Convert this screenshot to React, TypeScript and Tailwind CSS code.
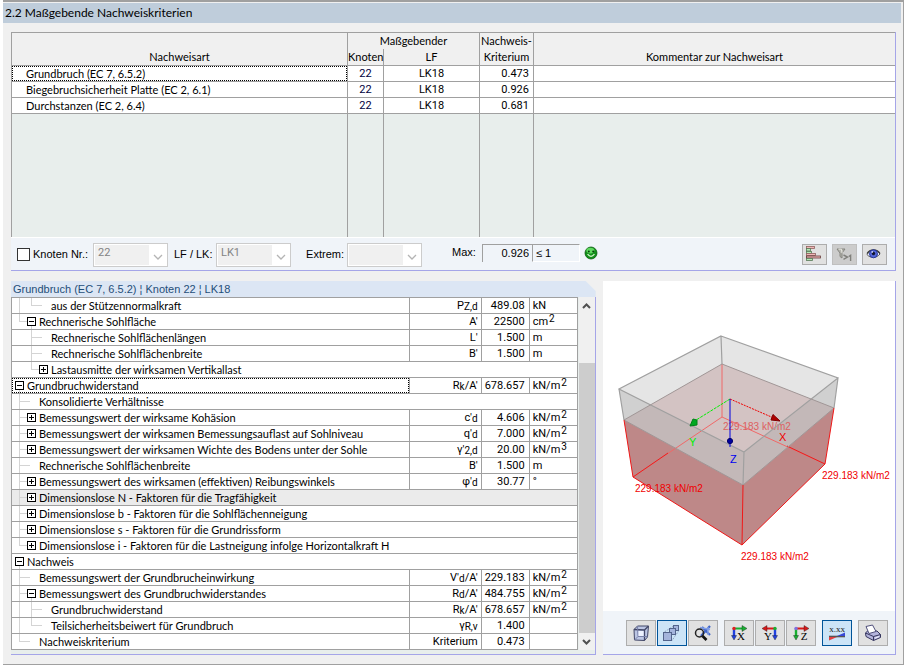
import type { ReactNode } from "react";
import clsx from "clsx";

interface CriterionRow {
  name: string;
  node: string;
  lf: string;
  value: string;
}

type Guide = "line" | "branch" | "last" | "none";
type Marker = "plus" | "minus" | "leaf" | "none";

interface DetailRow {
  label: string;
  guides: Guide[];
  marker: Marker;
  symbol?: ReactNode;
  value?: string;
  unit?: ReactNode;
  focused?: boolean;
  shaded?: boolean;
}

const criteria: CriterionRow[] = [
  { name: "Grundbruch (EC 7, 6.5.2)", node: "22", lf: "LK18", value: "0.473" },
  { name: "Biegebruchsicherheit Platte (EC 2, 6.1)", node: "22", lf: "LK18", value: "0.926" },
  { name: "Durchstanzen (EC 2, 6.4)", node: "22", lf: "LK18", value: "0.681" },
];

const Small = ({ children }: { children: ReactNode }) => (
  <span className="relative top-px text-[10px] leading-none">{children}</span>
);

const Power = ({ base, exp }: { base: string; exp: string }) => (
  <>
    {base}
    <sup className="top-[-3px] pl-px text-[10px]">{exp}</sup>
  </>
);

const knm2 = <Power base="kN/m" exp="2" />;

const details: DetailRow[] = [
  { label: "aus der Stützennormalkraft", guides: ["line", "last"], marker: "leaf", symbol: <>P<Small>Z,d</Small></>, value: "489.08", unit: "kN" },
  { label: "Rechnerische Sohlfläche", guides: ["last"], marker: "minus", symbol: "A'", value: "22500", unit: <Power base="cm" exp="2" /> },
  { label: "Rechnerische Sohlflächenlängen", guides: ["none", "branch"], marker: "leaf", symbol: "L'", value: "1.500", unit: "m" },
  { label: "Rechnerische Sohlflächenbreite", guides: ["none", "branch"], marker: "leaf", symbol: "B'", value: "1.500", unit: "m" },
  { label: "Lastausmitte der wirksamen Vertikallast", guides: ["none", "last"], marker: "plus" },
  { label: "Grundbruchwiderstand", guides: [], marker: "minus", symbol: <>R<Small>k</Small>/A'</>, value: "678.657", unit: knm2, focused: true },
  { label: "Konsolidierte Verhältnisse", guides: ["branch"], marker: "leaf" },
  { label: "Bemessungswert der wirksame Kohäsion", guides: ["branch"], marker: "plus", symbol: <>c'<Small>d</Small></>, value: "4.606", unit: knm2 },
  { label: "Bemessungswert der wirksamen Bemessungsauflast auf Sohlniveau", guides: ["branch"], marker: "plus", symbol: <>q'<Small>d</Small></>, value: "7.000", unit: knm2 },
  { label: "Bemessungswert der wirksamen Wichte des Bodens unter der Sohle", guides: ["branch"], marker: "plus", symbol: <>γ'<Small>2,d</Small></>, value: "20.00", unit: <Power base="kN/m" exp="3" /> },
  { label: "Rechnerische Sohlflächenbreite", guides: ["branch"], marker: "leaf", symbol: "B'", value: "1.500", unit: "m" },
  { label: "Bemessungswert des wirksamen (effektiven) Reibungswinkels", guides: ["branch"], marker: "plus", symbol: <>φ'<Small>d</Small></>, value: "30.77", unit: "°" },
  { label: "Dimensionslose N - Faktoren für die Tragfähigkeit", guides: ["branch"], marker: "plus", shaded: true },
  { label: "Dimensionslose b - Faktoren für die Sohlflächenneigung", guides: ["branch"], marker: "plus" },
  { label: "Dimensionslose s - Faktoren für die Grundrissform", guides: ["branch"], marker: "plus" },
  { label: "Dimensionslose i - Faktoren für die Lastneigung infolge Horizontalkraft H", guides: ["last"], marker: "plus" },
  { label: "Nachweis", guides: [], marker: "minus" },
  { label: "Bemessungswert der Grundbrucheinwirkung", guides: ["branch"], marker: "leaf", symbol: <>V'<Small>d</Small>/A'</>, value: "229.183", unit: knm2 },
  { label: "Bemessungswert des Grundbruchwiderstandes", guides: ["branch"], marker: "minus", symbol: <>R<Small>d</Small>/A'</>, value: "484.755", unit: knm2 },
  { label: "Grundbruchwiderstand", guides: ["line", "branch"], marker: "leaf", symbol: <>R<Small>k</Small>/A'</>, value: "678.657", unit: knm2 },
  { label: "Teilsicherheitsbeiwert für Grundbruch", guides: ["line", "last"], marker: "leaf", symbol: <>γ<Small>R,v</Small></>, value: "1.400", unit: "" },
  { label: "Nachweiskriterium", guides: ["last"], marker: "leaf", symbol: "Kriterium", value: "0.473", unit: "" },
];

const guidePath: Record<Guide, string> = {
  line: "M4.5 0V15",
  branch: "M4.5 0V15M4 7.5H12",
  last: "M4.5 0V8M4 7.5H12",
  none: "",
};

const TreeGuide = ({ type }: { type: Guide }) => (
  <svg width="12" height="15" viewBox="0 0 12 15" className="shrink-0" stroke="#d4d4d4" fill="none">
    <path d={guidePath[type]} />
  </svg>
);

const TreeMarker = ({ type }: { type: Marker }) => {
  if (type === "leaf") {
    return (
      <svg width="12" height="15" viewBox="0 0 12 15" className="shrink-0">
        <path d="M0 7.5H3" stroke="#d4d4d4" />
      </svg>
    );
  }
  return (
    <button type="button" aria-label={type === "plus" ? "Aufklappen" : "Zuklappen"} className="h-[15px] w-3 shrink-0">
      <svg width="12" height="15" viewBox="0 0 12 15" fill="none" stroke="#000">
        {type === "minus" && <path d="M4.5 12V15" stroke="#d4d4d4" />}
        <rect x="0.5" y="3.5" width="8" height="8" fill="#fff" />
        <path d={type === "plus" ? "M2 7.5H7M4.5 5V10" : "M2 7.5H7"} />
      </svg>
    </button>
  );
};

const Combo = ({ id, value }: { id: string; value: string }) => (
  <div className="flex h-6 w-[75px] shrink-0 items-stretch border border-[#cccccc] bg-white p-px">
    <select
      id={id}
      disabled
      defaultValue={value}
      className="min-w-0 flex-1 appearance-none bg-[#f0f0f0] pb-1 pl-[3px] font-['Roboto','Liberation_Sans',sans-serif] text-[11px] leading-4 text-[#838383] opacity-100"
    >
      <option value={value}>{value}</option>
    </select>
    <svg width="17" height="20" viewBox="0 0 17 20" className="shrink-0" fill="none" stroke="#b4b4b4" strokeWidth="1.3">
      <path d="M5 10L9 14L13 10" />
    </svg>
  </div>
);

interface ToolButtonProps {
  label: string;
  active?: boolean;
  children: ReactNode;
}

const ToolButton = ({ label, active, children }: ToolButtonProps) => (
  <button
    type="button"
    aria-label={label}
    aria-pressed={active}
    className={clsx(
      "h-[26px] w-[30px] border",
      active ? "border-[#005499] bg-[#cce4f7]" : "border-[#adadad] bg-[#e1e1e1]"
    )}
  >
    <svg width="28" height="24" viewBox="1 1 28 24" fill="none">
      {children}
    </svg>
  </button>
);

const SmallButton = ({ label, disabled, children }: { label: string; disabled?: boolean; children: ReactNode }) => (
  <button
    type="button"
    aria-label={label}
    disabled={disabled}
    className={clsx("h-[21px] w-[25px] border", disabled ? "border-[#bfbfbf] bg-[#cccccc]" : "border-[#adadad] bg-[#e1e1e1]")}
  >
    <svg width="23" height="19" viewBox="1 1 23 19" fill="none">
      {children}
    </svg>
  </button>
);

interface AxisIconProps {
  letter: string;
  textX: number;
  origin: number;
  flip?: boolean;
  across: string;
  down: string;
  dot: string;
}

const AxisIcon = ({ letter, textX, origin, flip, across, down, dot }: AxisIconProps) => {
  const dir = flip ? -1 : 1;
  return (
    <>
      <path d={`M${origin} 8.5h${9 * dir}`} stroke={across} strokeWidth="2" />
      <path d={`M${origin + 8 * dir} 5.5l${5 * dir} 3l${-5 * dir} 3z`} fill={across} stroke="#222" strokeWidth="0.4" />
      <path d={`M${origin} 8.5v8`} stroke={down} strokeWidth="2.4" />
      <path d={`M${origin - 2.5} 15.5h5l-2.5 4.5z`} fill={down} stroke="#222" strokeWidth="0.4" />
      <circle cx={origin} cy="8.5" r="1.7" fill={dot} />
      <text x={textX} y="20" textAnchor="middle" className="fill-black font-['Liberation_Serif',serif] text-[11px]">
        {letter}
      </text>
    </>
  );
};

const CriteriaTable = () => (
  <table className="w-full table-fixed border-separate border-spacing-0 border-l border-t border-[#a0a0a0] font-['Lato','Liberation_Sans',sans-serif] text-[11px] leading-[15px]">
    <colgroup>
      <col className="w-[336px]" />
      <col className="w-9" />
      <col className="w-24" />
      <col className="w-[54px]" />
      <col />
    </colgroup>
    <thead>
      <tr className="h-4">
        <th rowSpan={2} className="border-b border-r border-[#a0a0a0] pb-px align-bottom font-normal">Nachweisart</th>
        <th colSpan={2} className="border-r border-[#a0a0a0] align-top font-normal">Maßgebender</th>
        <th rowSpan={2} className="border-b border-r border-[#a0a0a0] align-top font-normal leading-4">Nachweis-<br />Kriterium</th>
        <th rowSpan={2} className="border-b border-[#a0a0a0] pb-px align-bottom font-normal">Kommentar zur Nachweisart</th>
      </tr>
      <tr className="h-[17px]">
        <th className="border-b border-r border-[#a0a0a0] align-top font-normal">Knoten</th>
        <th className="border-b border-r border-[#a0a0a0] align-top font-normal">LF</th>
      </tr>
    </thead>
    <tbody>
      {criteria.map((row, i) => (
        <tr key={row.name} className="h-4 bg-white">
          <td className="border-b border-r border-[#a0a0a0]">
            <div className={clsx("pl-[14px]", i === 0 && "-outline-offset-1 outline-1 outline-dotted outline-black")}>{row.name}</div>
          </td>
          <td className="border-b border-r border-[#a0a0a0] text-center font-['Roboto',sans-serif] text-[#000040]">{row.node}</td>
          <td className="border-b border-r border-[#a0a0a0] text-center font-['Roboto',sans-serif]">{row.lf}</td>
          <td className="border-b border-r border-[#a0a0a0] pr-1 text-right font-['Roboto',sans-serif]">{row.value}</td>
          <td className="border-b border-[#a0a0a0]" />
        </tr>
      ))}
      <tr className="h-[123px] bg-[#e8eeec]">
        {[0, 1, 2, 3].map((i) => (
          <td key={i} className="border-r border-[#a0a0a0]" />
        ))}
        <td />
      </tr>
    </tbody>
  </table>
);

const FilterBar = () => (
  <div className="flex h-[33px] items-center whitespace-nowrap border-t border-white bg-[#f0f4f9] pl-[6px] pr-2 pt-px text-[11px]">
    <input
      id="node-filter"
      type="checkbox"
      className="h-[13px] w-[13px] appearance-none border border-[#333] bg-white checked:bg-[#333]"
    />
    <label htmlFor="node-filter" className="w-[63px] pl-[3px]">Knoten Nr.:</label>
    <Combo id="node" value="22" />
    <label htmlFor="lf" className="w-12 pl-[6px]">LF / LK:</label>
    <Combo id="lf" value="LK1" />
    <label htmlFor="extreme" className="w-14 pr-[3px] text-right">Extrem:</label>
    <Combo id="extreme" value="" />
    <div className="flex items-center pb-1 pl-[30px]">
      <label htmlFor="max" className="w-[30px]">Max:</label>
      <input
        id="max"
        readOnly
        value="0.926"
        className="h-[18px] w-[50px] border-l border-t border-[#a0a0a0] bg-transparent pr-[3px] text-right text-[11px] outline-none"
      />
      <output htmlFor="max" className="h-[18px] w-12 border-b border-l border-r border-t border-b-white border-l-[#a0a0a0] border-r-white border-t-[#a0a0a0] pl-[3px] leading-4">
        ≤ 1
      </output>
      <svg width="14" height="14" viewBox="0 0 14 14" className="ml-1">
        <circle cx="7" cy="7" r="6" fill="#12901a" stroke="#0a5c10" strokeWidth="0.8" />
        <ellipse cx="6.4" cy="4.6" rx="4" ry="2.8" fill="#5fd860" />
        <circle cx="4.8" cy="5.4" r="1" fill="#073d0a" />
        <circle cx="9.2" cy="5.4" r="1" fill="#073d0a" />
        <path d="M3.6 8.2Q7 12.4 10.4 8.2" fill="none" stroke="#d8f5d0" strokeWidth="1.3" />
      </svg>
    </div>
    <div className="ml-auto flex gap-[5px]">
      <SmallButton label="Balkendiagramm">
        <g strokeWidth="0.8">
          <rect x="4.5" y="2.5" width="8" height="2" fill="#f0b8b8" stroke="#906060" />
          <rect x="4.5" y="4.5" width="4" height="2.5" fill="#b8e8b8" stroke="#587858" />
          <rect x="4.5" y="7.5" width="5" height="2" fill="#b8e8b8" stroke="#587858" />
          <rect x="4.5" y="9.5" width="9" height="2" fill="#f0b8b8" stroke="#906060" />
          <rect x="4.5" y="12" width="14" height="2" fill="#f0b8b8" stroke="#603838" />
          <rect x="4.5" y="14.5" width="6" height="2" fill="#b8e8b8" stroke="#587858" />
        </g>
      </SmallButton>
      <SmallButton label="Filter größer 1" disabled>
        <path d="M5 5h8l-3 4v5l-2 -1.5v-3.5z" fill="#b4b4ae" stroke="#85857f" />
        <path d="M6.5 5.2h3l0.6 4" stroke="#ecece6" />
        <path d="M11.5 11l4 2L11.5 15.3M16.8 12.5l1.8 -1.2V17" stroke="#80807c" strokeWidth="1.4" />
      </SmallButton>
      <SmallButton label="Ansicht">
        <path d="M5 10.5C8 5.5 15 5 18 10C15 14 8 14.5 5 10.5z" fill="#e8eeff" stroke="#555" />
        <path d="M5 9.5C8 4.8 15 4.5 18 9.5" stroke="#333" strokeWidth="1.2" />
        <circle cx="11.5" cy="9.8" r="4" fill="#5568d8" stroke="#28389c" />
        <circle cx="11.5" cy="9.5" r="1.7" fill="#101430" />
        <circle cx="10.3" cy="8" r="0.8" fill="#fff" />
      </SmallButton>
    </div>
  </div>
);

const DetailTable = () => (
  <table className="min-w-0 flex-1 table-fixed border-separate border-spacing-0 self-start border-l border-t border-[#a0a0a0] bg-white font-['Roboto','Liberation_Sans',sans-serif] text-[11px] leading-[15px]">
    <colgroup>
      <col />
      <col className="w-[72px]" />
      <col className="w-12" />
      <col className="w-12" />
    </colgroup>
    <tbody>
      {details.map((row, i) => (
        <tr key={i} className={clsx("h-4", row.shaded && "bg-[#ebebeb]")}>
          <td colSpan={row.value ? 1 : 4} className="border-b border-r border-[#a0a0a0]">
            <div
              className={clsx(
                "flex h-[15px] items-center whitespace-nowrap pl-[3px] font-['Lato','Liberation_Sans',sans-serif]",
                row.focused && "-outline-offset-1 outline-1 outline-dotted outline-black"
              )}
            >
              {row.guides.map((guide, j) => (
                <TreeGuide key={j} type={guide} />
              ))}
              <TreeMarker type={row.marker} />
              <span>{row.label}</span>
            </div>
          </td>
          {row.value && (
            <>
              <td className="border-b border-r border-[#a0a0a0] pr-[3px] text-right">{row.symbol}</td>
              <td className="border-b border-r border-[#a0a0a0] pr-1 text-right">{row.value}</td>
              <td className="border-b border-r border-[#a0a0a0] pl-[3px]">{row.unit}</td>
            </>
          )}
        </tr>
      ))}
    </tbody>
  </table>
);

const ScrollBar = () => (
  <div className="ml-px flex w-4 flex-col bg-[#f0f0f0]">
    <button type="button" aria-label="Nach oben" className="flex h-[17px] items-center justify-center">
      <svg width="9" height="6" viewBox="0 0 9 6" fill="none" stroke="#505050" strokeWidth="2">
        <path d="M1 5L4.5 1.5L8 5" />
      </svg>
    </button>
    <div className="flex flex-1 flex-col">
      <div className="flex-[49]" />
      <div className="flex-[270] bg-[#cdcdcd]" />
    </div>
    <button type="button" aria-label="Nach unten" className="flex h-[17px] items-center justify-center">
      <svg width="9" height="6" viewBox="0 0 9 6" fill="none" stroke="#505050" strokeWidth="2">
        <path d="M1 1L4.5 4.5L8 1" />
      </svg>
    </button>
  </div>
);

const PressureView = () => (
  <svg width="291" height="330" viewBox="0 0 291 330" fill="none" className="font-['Liberation_Sans',sans-serif] text-[10px]">
    <path d="M118 55L235 97L222 183L139 264L30 196L16 108z" fill="#e5e5e5" />
    {/* pressure block below the foundation */}
    <path d="M119 83L231 127L140 204L21 139z" fill="#d3c3c3" />
    <path d="M21 139L140 204L231 127L222 183L139 264L30 196z" fill="#be8888" />
    <path d="M16 108L141 171L235 97L231 127L140 204L21 139z" fill="#a0a0a0" fillOpacity="0.3" />
    <path d="M119 83V136M119 136L30 196M119 136L222 183" stroke="#f06868" />
    <path d="M65 172L30 196M184 165L222 183" stroke="#e82020" />
    <text x="120" y="149" fill="#dc6060">229.183 kN/m2</text>
    {/* concrete edges */}
    <path d="M118 55L235 97L141 171L16 108zM118 55L119 83M235 97L231 127M141 171L140 204M16 108L21 139" stroke="#a0a0a0" strokeWidth="1.2" />
    <path d="M119 83L231 127L140 204L21 139z" stroke="#a09696" />
    <path d="M21 139L30 196L139 264L222 183L231 127M140 204L139 264" stroke="#f01818" />
    {/* axes */}
    <path d="M127 118L173 138" stroke="#f00000" strokeDasharray="2 1" />
    <path d="M127 118L90 141" stroke="#00f000" strokeDasharray="3 1" />
    <path d="M127 118V166" stroke="#0000e0" />
    <path d="M170 133.5L177 140L168 139z" fill="#b00000" stroke="#800000" />
    <path d="M90 138L94 139L94 144L87 145z" fill="#00a820" stroke="#008018" />
    <circle cx="127" cy="160" r="2.6" fill="#0000a0" stroke="#000068" />
    <g className="text-[11px]">
      <text x="176" y="160" fill="#f00000">X</text>
      <text x="86" y="165" fill="#00f000">Y</text>
      <text x="127" y="182" fill="#0000f0">Z</text>
    </g>
    <g fill="#f00000">
      <text x="32" y="211">229.183 kN/m2</text>
      <text x="219" y="198">229.183 kN/m2</text>
      <text x="138" y="279">229.183 kN/m2</text>
    </g>
  </svg>
);

const ViewToolbar = () => (
  <div className="flex h-[43px] items-center justify-end gap-[6px] bg-[#f0f4f9] pr-[7px]">
    <div className="flex gap-px">
      <ToolButton label="Perspektive">
        <path d="M8 9.5L11.5 6H22.5L21.5 17L18.5 20.5L8.5 20z" fill="#bcc6e4" stroke="#434868" />
        <path d="M8 9.5L18.5 10L22.5 6M18.5 10V20.5" stroke="#434868" strokeWidth="1.3" />
        <path d="M11.5 6L12 16.5L8.5 20M12 16.5H21.5" stroke="#7880a8" />
        <path d="M12.5 11H17.5V16H12.5z" fill="#eef2ff" />
      </ToolButton>
      <ToolButton label="Modelle anzeigen" active>
        <path d="M6.5 12.5L17.5 5.5M15 20.5L22 10.5" stroke="#8090b0" strokeDasharray="1 1" />
        <g fill="#a4b4dc" stroke="#53648c">
          <rect x="16.5" y="5.5" width="5" height="5" />
          <rect x="12.5" y="8.5" width="6" height="6" />
          <rect x="6.5" y="12.5" width="8" height="8" />
        </g>
      </ToolButton>
      <ToolButton label="Alles zeigen">
        <path d="M14 7L22 15M22 6L13 16" stroke="#3f64c8" strokeWidth="2.2" />
        <path d="M12 7.5L22 9.5M20 7V15" stroke="#83a0e8" strokeWidth="1.4" />
        <circle cx="11.5" cy="13" r="4" stroke="#222" strokeWidth="1.5" />
        <path d="M14.5 16L18.5 20" stroke="#111" strokeWidth="2.6" />
      </ToolButton>
    </div>
    <div className="flex gap-px">
      <ToolButton label="Ansicht X">
        <AxisIcon letter="X" textX={17} origin={10} across="#18b030" down="#2040e0" dot="#e02020" />
      </ToolButton>
      <ToolButton label="Ansicht Y">
        <AxisIcon letter="Y" textX={13} origin={20} flip across="#d81818" down="#2040e0" dot="#18b030" />
      </ToolButton>
      <ToolButton label="Ansicht Z">
        <AxisIcon letter="Z" textX={18} origin={10} across="#d81818" down="#18b030" dot="#8070e0" />
      </ToolButton>
    </div>
    <ToolButton label="Werte anzeigen" active>
      <text x="15" y="12" textAnchor="middle" className="fill-[#222] font-['Liberation_Serif',serif] text-[9px]">x.xx</text>
      <path d="M7 16.5H23" stroke="#555" strokeWidth="1.6" />
      <path d="M7 17L15 17L7 20.5z" fill="#e04040" />
      <path d="M15 16L23 12.5V16z" fill="#3848d8" />
    </ToolButton>
    <ToolButton label="Drucken">
      <path d="M7.5 13L10 10.5L19 11L22.5 14.5V17.5L15.5 20.5L8 16.5z" fill="#b4b4dc" stroke="#34345c" />
      <path d="M8 13.2L15.5 16.5L22.5 14.5M15.5 16.5V20.5" stroke="#34345c" />
      <path d="M8 6.5L14.5 5L18 11.5L11 13.5z" fill="#fff" stroke="#50507c" />
      <path d="M17 18.2L21 16.5" stroke="#f0f0ff" strokeWidth="1.2" />
    </ToolButton>
  </div>
);

const App = () => {
  return (
    <div className="flex min-h-screen flex-col bg-white pb-[2px] pl-[3px] pr-[2px] font-['Liberation_Sans',Arial,sans-serif] text-black">
      <div className="flex flex-1 flex-col border-b border-r border-t-2 border-[#a0a0a0] bg-[#f0f0f0] pt-px">
        <h1 className="mr-[2px] h-5 bg-[#bfcddb] pl-[2px] font-['Lato',sans-serif] text-[12px] leading-5">
          2.2 Maßgebende Nachweiskriterien
        </h1>

        <main className="flex flex-1 flex-col gap-[10px] pb-[9px] pl-2 pr-[7px] pt-[9px]">
          <section className="border-b border-r border-[#a5a5e8]">
            <CriteriaTable />
            <FilterBar />
          </section>

          <div className="flex flex-1 gap-[7px]">
            <section className="flex min-w-0 flex-[2] flex-col">
              <h2 className="h-4 bg-[#dce6f4] pl-[2px] text-[11px] leading-4 text-[#1f4e79] [clip-path:polygon(0_0,calc(100%-10px)_0,100%_10px,100%_100%,0_100%)]">
                Grundbruch (EC 7, 6.5.2) ¦ Knoten 22 ¦ LK18
              </h2>
              <div className="flex flex-1 border-b border-r border-[#a5a5e8] bg-[#e8eeec] pb-1">
                <DetailTable />
                <ScrollBar />
              </div>
            </section>

            <section className="flex min-w-[292px] flex-1 flex-col border-b border-r border-[#a5a5e8] bg-white">
              <div className="flex flex-1 items-start justify-center">
                <PressureView />
              </div>
              <ViewToolbar />
            </section>
          </div>
        </main>
      </div>
    </div>
  );
};

export default App;
